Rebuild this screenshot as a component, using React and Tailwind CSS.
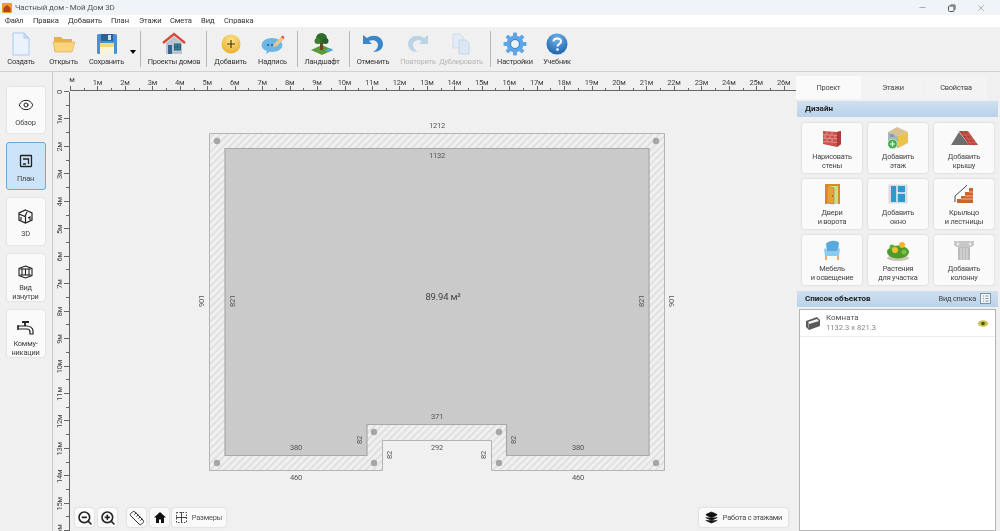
import React from 'react';
import { Eye, Minus, X, Layers, ZoomIn, ZoomOut, Ruler } from 'lucide-react';

const menuItems = [
  { label: 'Файл', width: 'w-[28px]' },
  { label: 'Правка', width: 'w-[35px]' },
  { label: 'Добавить', width: 'w-[43px]' },
  { label: 'План', width: 'w-[28px]' },
  { label: 'Этажи', width: 'w-[31px]' },
  { label: 'Смета', width: 'w-[31px]' },
  { label: 'Вид', width: 'w-[23px]' },
  { label: 'Справка', width: 'w-[40px]' },
];

// --- toolbar icons ---
const NewIcon = () => (
  <svg width="20" height="24" viewBox="0 0 20 24">
    <path d="M2 1h11l5 5v17H2z" fill="#eaf2fd" stroke="#a9c8ef" />
    <path d="M13 1v5h5z" fill="#c9def6" stroke="#a9c8ef" />
  </svg>
);
const OpenIcon = () => (
  <svg width="24" height="20" viewBox="0 0 24 20">
    <path d="M2 3h7l2 2h9v12H2z" fill="#e8b04a" />
    <path d="M1 8h22l-3 10H3z" fill="#fbd47f" stroke="#e3a63e" strokeWidth="0.6" />
  </svg>
);
const SaveIcon = () => (
  <svg width="22" height="22" viewBox="0 0 22 22">
    <rect x="1" y="1" width="20" height="20" rx="1.5" fill="#4a90d9" />
    <rect x="5" y="1" width="12" height="7" fill="#2c5f94" />
    <rect x="12" y="2" width="3" height="5" fill="#cfe2f5" />
    <rect x="4" y="10" width="14" height="11" fill="#f8f4d8" />
    <rect x="4" y="10" width="14" height="4" fill="#f2dc7a" />
  </svg>
);
const ProjectsIcon = () => (
  <svg width="24" height="24" viewBox="0 0 24 24">
    <path d="M1 11L12 2l11 9" fill="none" stroke="#d9483b" strokeWidth="2.4" />
    <path d="M4 11l8-6.5L20 11v11H4z" fill="#b9c4cf" />
    <rect x="6" y="13" width="4" height="9" fill="#33668f" />
    <rect x="12.5" y="12" width="6" height="6" fill="#3a8aa8" stroke="#1f4f66" strokeWidth="0.8" />
    <path d="M15.5 12v6M12.5 15h6" stroke="#1f4f66" strokeWidth="0.7" />
  </svg>
);
const AddIcon = () => (
  <svg width="20" height="20" viewBox="0 0 20 20">
    <defs>
      <radialGradient id="addGrad" cx="50%" cy="30%" r="75%">
        <stop offset="0%" stopColor="#fbe38a" />
        <stop offset="100%" stopColor="#e8ad2a" />
      </radialGradient>
    </defs>
    <circle cx="10" cy="10" r="9.5" fill="url(#addGrad)" />
    <path d="M10 6v8M6 10h8" stroke="#4a3a10" strokeWidth="1.2" />
  </svg>
);
const NoteIcon = () => (
  <svg width="24" height="20" viewBox="0 0 24 20">
    <ellipse cx="11" cy="11" rx="10.5" ry="7" fill="#6cb7e6" />
    <path d="M6 16l-1 4 5-3z" fill="#6cb7e6" />
    <circle cx="7" cy="11" r="0.9" fill="#1e4a6b" />
    <circle cx="11" cy="11" r="0.9" fill="#1e4a6b" />
    <path d="M13 10l7-7 3 2-7 7-4 1z" fill="#f0c68a" />
    <path d="M20 3l1.5-1.5 2 2L22.500 5z" fill="#d9483b" />
  </svg>
);
const LandscapeIcon = () => (
  <svg width="24" height="24" viewBox="0 0 24 24">
    <path d="M1 18l11-5 11 5-11 5z" fill="#5b9a3c" />
    <path d="M15 18l5-2 3 2-5 2z" fill="#57a7d6" />
    <rect x="10" y="11" width="3" height="7" fill="#6b4423" />
    <circle cx="11.500" cy="6.500" r="5.500" fill="#2f6b2a" />
    <circle cx="7.500" cy="9" r="3" fill="#3c7f33" />
    <circle cx="15.500" cy="9" r="3" fill="#28602a" />
  </svg>
);
const UndoIcon = ({ muted }) => (
  <svg width="22" height="20" viewBox="0 0 22 20">
    <path d="M1 1v9h9L7 7c4-2 9 0 9 4 0 3-2 5-5 7 6 0 10-3 10-8C21 3 12-1 5 4z" fill={muted ? '#bcd3e6' : '#3d86c9'} />
  </svg>
);
const DuplicateIcon = () => (
  <svg width="18" height="22" viewBox="0 0 18 22">
    <path d="M1 1h7l3 3v11H1z" fill="#e4edf6" stroke="#cbdcec" />
    <path d="M7 7h7l3 3v11H7z" fill="#dbe7f3" stroke="#c2d6e9" />
  </svg>
);
const GearIcon = () => (
  <svg width="24" height="24" viewBox="0 0 24 24">
    <g fill="#5ea6e6">
      <circle cx="12" cy="12" r="8.500" />
      <rect x="10" y="0.500" width="4" height="23" rx="1" />
      <rect x="10" y="0.500" width="4" height="23" rx="1" transform="rotate(45 12 12)" />
      <rect x="10" y="0.500" width="4" height="23" rx="1" transform="rotate(90 12 12)" />
      <rect x="10" y="0.500" width="4" height="23" rx="1" transform="rotate(135 12 12)" />
    </g>
    <circle cx="12" cy="12" r="4.500" fill="#e8f2fb" stroke="#3a7cbd" />
  </svg>
);
const HelpIcon = () => (
  <svg width="22" height="22" viewBox="0 0 22 22">
    <defs>
      <radialGradient id="helpGrad" cx="50%" cy="25%" r="80%">
        <stop offset="0%" stopColor="#6fb2ec" />
        <stop offset="100%" stopColor="#175fa8" />
      </radialGradient>
    </defs>
    <circle cx="11" cy="11" r="10.500" fill="url(#helpGrad)" />
    <path d="M7.500 8.500C7.500 4.500 15 4.500 15 8.500c0 2.500-3.500 2.500-3.500 5" fill="none" stroke="#fff" strokeWidth="2" />
    <circle cx="11.500" cy="16.500" r="1.300" fill="#fff" />
  </svg>
);

const tools = [
  { label: 'Создать', icon: <NewIcon />, width: 'w-[42px]' },
  { label: 'Открыть', icon: <OpenIcon />, width: 'w-[43px]' },
  { label: 'Сохранить', icon: <SaveIcon />, width: 'w-[43px]' },
  { arrow: true },
  { sep: true, margin: 'ml-[3px] mr-[1px]' },
  { label: 'Проекты домов', icon: <ProjectsIcon />, width: 'w-[64px]' },
  { sep: true, margin: 'mx-0' },
  { label: 'Добавить', icon: <AddIcon />, width: 'w-[47px]' },
  { label: 'Надпись', icon: <NoteIcon />, width: 'w-[37px]' },
  { sep: true, margin: 'ml-[6px] mr-[1px]' },
  { label: 'Ландшафт', icon: <LandscapeIcon />, width: 'w-[46px]' },
  { sep: true, margin: 'ml-[4px] mr-[1px]' },
  { label: 'Отменить', icon: <UndoIcon />, width: 'w-[44px]' },
  { label: 'Повторить', icon: <div className="-scale-x-100"><UndoIcon muted /></div>, width: 'w-[46px]', muted: true },
  { label: 'Дублировать', icon: <DuplicateIcon />, width: 'w-[40px]', muted: true },
  { sep: true, margin: 'ml-[9px] mr-[1px]' },
  { label: 'Настройки', icon: <GearIcon />, width: 'w-[46px]' },
  { label: 'Учебник', icon: <HelpIcon />, width: 'w-[38px]' },
];

// --- sidebar icons ---
const PlanIcon = () => (
  <svg width="14" height="14" viewBox="0 0 14 14" fill="none" stroke="#222" strokeWidth="1.300">
    <rect x="1.500" y="1.500" width="11" height="11" rx="0.500" />
    <path d="M4 5h5.500v5M7 10H4" />
  </svg>
);
const CubeHouseIcon = () => (
  <svg width="15" height="15" viewBox="0 0 15 15" fill="none" stroke="#222" strokeWidth="1.200">
    <path d="M7.500 1L14 4v7l-6.500 3L1 11V4z" />
    <path d="M1 5l6 2.500L9 3M7.500 7.500V14" />
    <path d="M3 8v3M10 9l2-1v3" />
  </svg>
);
const InsideIcon = () => (
  <svg width="15" height="14" viewBox="0 0 15 14" fill="none" stroke="#222" strokeWidth="1.100">
    <path d="M7.500 1l6.500 2.500v7L7.500 13 1 10.500v-7z" />
    <rect x="4" y="4" width="7" height="6" />
    <path d="M2 4h2M11 4h2M2 10h2M11 10h2M7.500 4v6" />
  </svg>
);
const TapIcon = () => (
  <svg width="18" height="16" viewBox="0 0 18 16" fill="none" stroke="#222" strokeWidth="1.200">
    <path d="M1 6h9c3 0 6 2 6 5v3h-3v-2c0-2-1-3-3-3H1z" />
    <path d="M8 6V3M5 2h7" strokeWidth="1.800" />
    <path d="M1 5v5" />
  </svg>
);

const sideButtons = [
  { label: ['Обзор'], icon: <Eye size={16} strokeWidth={1.500} className="text-[#222]" />, size: 'h-[46px] mb-[9px]' },
  { label: ['План'], icon: <PlanIcon />, size: 'h-[48px] mb-[8px]', active: true },
  { label: ['3D'], icon: <CubeHouseIcon />, size: 'h-[47px] mb-[9px]' },
  { label: ['Вид', 'изнутри'], icon: <InsideIcon />, size: 'h-[47px] mb-[9px]' },
  { label: ['Комму-', 'никации'], icon: <TapIcon />, size: 'h-[47px]' },
];

// --- design panel icons ---
const WallIcon = () => (
  <svg width="20" height="18" viewBox="0 0 20 18">
    <path d="M1 2l14 1 4 -1v13l-4 3-14-3z" fill="#c9524c" />
    <path d="M15 3v15l4-3V2z" fill="#a83d3a" />
    <path d="M1 5.500l14 1M1 9l14 1M1 12.500l14 1M5 2.500v3M10 3v3M3 6v3.500M8 6.500v3.500M13 6.500v3.500M5 9.500v3.500M10 10v3.500" stroke="#eaa9a3" strokeWidth="0.700" />
  </svg>
);
const FloorIcon = () => (
  <svg width="22" height="24" viewBox="0 0 22 24">
    <path d="M10 1l11 5-10 4L1 6z" fill="#d9c193" />
    <path d="M1 6l10 4v12L1 17z" fill="#a9b4bd" />
    <path d="M11 10l10-4v11l-10 5z" fill="#ecc24d" />
    <rect x="3" y="8" width="4" height="3" fill="#7f9fb8" />
    <circle cx="5.500" cy="18" r="4.800" fill="#3db249" stroke="#fff" strokeWidth="0.600" />
    <path d="M5.500 15.500v5M3 18h5" stroke="#fff" strokeWidth="1.200" />
  </svg>
);
const RoofIcon = () => (
  <svg width="28" height="16" viewBox="0 0 28 16">
    <path d="M1 15L9 2 19 15z" fill="#6e6e6e" />
    <path d="M9 1h9l10 14H19z" fill="#b5403a" />
    <path d="M11 5h9M14 9h9M17 12.500h9M13 1l9 14M17 1l9 14" stroke="#d9736c" strokeWidth="0.600" />
  </svg>
);
const DoorIcon = () => (
  <svg width="17" height="22" viewBox="0 0 17 22">
    <rect x="1" y="1" width="15" height="20" fill="#d98a2b" />
    <rect x="3" y="3" width="11" height="18" fill="#c7e08a" />
    <path d="M3 3l7 2v16l-7-1z" fill="#e6a03c" stroke="#b8701c" strokeWidth="0.500" />
    <circle cx="8.500" cy="13" r="0.700" fill="#7a4a10" />
  </svg>
);
const WindowIcon = () => (
  <svg width="20" height="20" viewBox="0 0 20 20">
    <rect x="0.500" y="0.500" width="19" height="19" fill="#d7dde2" />
    <rect x="3" y="2" width="14" height="16" fill="#2a9ad0" />
    <path d="M9 2v16M9 9h8" stroke="#eef4f8" strokeWidth="1.500" />
  </svg>
);
const StairsIcon = () => (
  <svg width="20" height="20" viewBox="0 0 20 20">
    <path d="M1 19h18V4h-4v4h-4v4H7v3H3v4z" fill="#c9662f" />
    <path d="M7 15h12M11 12h8M15 8h4" stroke="#f3c9a5" strokeWidth="0.800" />
    <path d="M1 12L10 4l3-3" fill="none" stroke="#333" strokeWidth="0.900" />
    <path d="M1 12v6" stroke="#333" strokeWidth="0.900" />
  </svg>
);
const ChairIcon = () => (
  <svg width="18" height="20" viewBox="0 0 18 20">
    <path d="M3 4C4 1 14-1 16 3l-1 9H4z" fill="#5aa9dc" />
    <path d="M1 9c2-1 3 0 3 2h10c0-2 2-3 3-2l-1 7H2z" fill="#8accef" />
    <path d="M3 16v4M15 16v4" stroke="#d98a2b" strokeWidth="1.300" />
  </svg>
);
const PlantsIcon = () => (
  <svg width="24" height="22" viewBox="0 0 24 22">
    <ellipse cx="12" cy="19" rx="11" ry="3" fill="#c9c5b2" />
    <ellipse cx="12" cy="13" rx="11" ry="6.500" fill="#4f9a2c" />
    <circle cx="6" cy="8" r="2.500" fill="#5fae34" />
    <circle cx="9" cy="11" r="3" fill="#f2c230" />
    <circle cx="16" cy="6" r="3" fill="#f2b530" />
    <circle cx="18" cy="13" r="2.500" fill="#7ac143" />
  </svg>
);
const ColumnIcon = () => (
  <svg width="20" height="20" viewBox="0 0 20 20">
    <path d="M0 1h20v3c0 2-2 3-3 3H3C2 7 0 6 0 4z" fill="#c8c8c8" />
    <rect x="4" y="7" width="12" height="13" fill="#bcbcbc" />
    <path d="M7 8v12M10 8v12M13 8v12" stroke="#e4e4e4" strokeWidth="0.900" />
    <circle cx="4" cy="4" r="1.200" fill="#f0f0f0" />
    <circle cx="16" cy="4" r="1.200" fill="#f0f0f0" />
  </svg>
);

const designItems = [
  { label: ['Нарисовать', 'стены'], icon: <WallIcon /> },
  { label: ['Добавить', 'этаж'], icon: <FloorIcon /> },
  { label: ['Добавить', 'крышу'], icon: <RoofIcon /> },
  { label: ['Двери', 'и ворота'], icon: <DoorIcon /> },
  { label: ['Добавить', 'окно'], icon: <WindowIcon /> },
  { label: ['Крыльцо', 'и лестницы'], icon: <StairsIcon /> },
  { label: ['Мебель', 'и освещение'], icon: <ChairIcon /> },
  { label: ['Растения', 'для участка'], icon: <PlantsIcon /> },
  { label: ['Добавить', 'колонну'], icon: <ColumnIcon /> },
];

const M = 27.45;
const steps = Array.from({ length: 53 }, (_, i) => i);

function TopRuler() {
  return (
    <svg width="743" height="20" className="block" viewBox="53 72 743 20">
      <text x="72" y="82" fontSize="7.500" fill="#444" textAnchor="middle">м</text>
      <line x1="70" y1="90.500" x2="796" y2="90.500" stroke="#666" />
      {steps.map((i) => {
        const x = Math.round(70 + (i * M) / 2) + 0.5;
        const major = i % 2 === 0;
        return <line key={i} x1={x} x2={x} y1={major ? 86 : 88} y2="90" stroke="#666" />;
      })}
      {steps.filter((i) => i % 2 === 0 && i > 0).map((i) => (
        <text key={i} x={70 + (i * M) / 2} y="85" fontSize="7.500" fill="#444" textAnchor="middle">{i / 2}м</text>
      ))}
    </svg>
  );
}

function LeftRuler() {
  const marks = Array.from({ length: 33 }, (_, i) => i);
  return (
    <svg width="17" height="439" className="block shrink-0 overflow-visible" viewBox="53 92 17 439">
      <line x1="69.500" y1="92" x2="69.500" y2="531" stroke="#666" />
      {marks.map((i) => {
        const y = Math.round(92 + (i * M) / 2) - 0.5;
        const major = i % 2 === 0;
        return <line key={i} x1={major ? 64 : 66} x2="69" y1={y} y2={y} stroke="#666" />;
      })}
      {marks.filter((i) => i % 2 === 0).map((i) => {
        const y = 92 + (i * M) / 2;
        return (
          <text key={i} x="62" y={y} fontSize="7.500" fill="#444" textAnchor="middle" transform={`rotate(-90 62 ${y})`}>
            {i === 0 ? '0' : `${i / 2}м`}
          </text>
        );
      })}
    </svg>
  );
}

function Dim({ x, y, v, rotate }) {
  return (
    <text
      x={x}
      y={y + 3}
      fontSize="7.500"
      fill="#555"
      textAnchor="middle"
      transform={rotate ? `rotate(-90 ${x} ${y})` : undefined}
    >
      {v}
    </text>
  );
}

function FloorPlan() {
  const walls = 'M209.500 133.500H664.500V470.500H491.500V440.500H382.500V470.500H209.500Z';
  const room = 'M225 148.500H649V455.500H506.500V424.500H367V455.500H225Z';
  const dots = [[217, 141], [656, 141], [217, 463], [656, 463], [374, 432], [499, 432], [374, 463], [499, 463]];
  return (
    <svg width="725" height="439" className="block" viewBox="70 92 725 439">
      <defs>
        <pattern id="hatch" width="5" height="5" patternUnits="userSpaceOnUse" patternTransform="rotate(45)">
          <rect width="5" height="5" fill="#f0f0f0" />
          <rect width="2" height="5" fill="#e0e0e0" />
        </pattern>
      </defs>
      <path d={walls} fill="url(#hatch)" stroke="#b4b4b4" />
      <path d={room} fill="#cacaca" stroke="#a8a8a8" strokeWidth="1.200" />
      {dots.map(([cx, cy]) => <circle key={`${cx}-${cy}`} cx={cx} cy={cy} r="3.200" fill="#a6a6a6" />)}
      <Dim x={437} y={125} v="1212" />
      <Dim x={437} y={155} v="1132" />
      <Dim x={201} y={301} v="901" rotate />
      <Dim x={232} y={301} v="821" rotate />
      <Dim x={641} y={301} v="821" rotate />
      <Dim x={671} y={301} v="901" rotate />
      <text x="443" y="300" fontSize="9.500" fill="#444" textAnchor="middle">89.94 м²</text>
      <Dim x={437} y={416} v="371" />
      <Dim x={437} y={447} v="292" />
      <Dim x={296} y={447} v="380" />
      <Dim x={578} y={447} v="380" />
      <Dim x={296} y={477} v="460" />
      <Dim x={578} y={477} v="460" />
      <Dim x={359} y={440} v="82" rotate />
      <Dim x={389} y={455} v="82" rotate />
      <Dim x={483} y={455} v="82" rotate />
      <Dim x={513} y={440} v="82" rotate />
    </svg>
  );
}

const floatBtn = 'flex items-center justify-center h-[19px] bg-[#fafafa] rounded-[3px] shadow-[0_0_2px_rgba(0,0,0,0.2)]';
const sectionHead = 'font-bold text-[8px] tracking-normal text-[#222]';

export default function App() {
  return (
    <div className="w-[1000px] h-[531px] overflow-hidden flex flex-col bg-[#f0f0f0] text-[#333] font-['Roboto',sans-serif] text-[7.400px] tracking-[-0.2px] blur-[0.3px]">
      {/* title bar */}
      <div className="h-[15px] shrink-0 flex items-center bg-[#eff4f9] pl-[2px]">
        <svg width="10" height="10" viewBox="0 0 10 10" className="mr-[3px]">
          <rect width="10" height="10" rx="1" fill="#f09a2a" />
          <path d="M1.500 5L5 2l3.500 3v4h-7z" fill="#b8401e" />
        </svg>
        <span className="text-[8px] tracking-[-0.15px] text-[#555]">Частный дом - Мой Дом 3D</span>
        <div className="ml-auto flex items-center text-[#555]">
          <Minus size={9} strokeWidth={1.200} className="mr-[21px]" />
          <svg width="8" height="8" viewBox="0 0 8 8" fill="none" stroke="#555" className="mr-[20px]">
            <rect x="0.500" y="2" width="5.500" height="5.500" rx="1" />
            <path d="M2.500 1h4.500v4.500" />
          </svg>
          <X size={10} strokeWidth={1} className="mr-[14px]" />
        </div>
      </div>
      {/* menu */}
      <div className="h-[12px] shrink-0 flex items-center bg-white pl-[5px] text-[7.600px] tracking-[-0.1px] text-[#333]">
        {menuItems.map((m) => <span key={m.label} className={m.width}>{m.label}</span>)}
      </div>
      {/* toolbar */}
      <div className="h-[45px] shrink-0 flex items-center border-b border-[#d0d0d0] bg-[#f0f0f0]">
        {tools.map((t, i) => {
          if (t.sep) return <div key={i} className={`w-px h-[36px] bg-[#b8b8b8] ${t.margin}`} />;
          if (t.arrow) {
            return (
              <div key={i} className="w-[9px] h-full flex items-center justify-center">
                <div className="w-0 h-0 border-x-[3px] border-x-transparent border-t-[4px] border-t-black mt-[5px]" />
              </div>
            );
          }
          return (
            <div key={i} className={`${t.width} shrink-0 flex flex-col items-center`}>
              <div className="h-[26px] flex items-center justify-center">{t.icon}</div>
              <span className={`whitespace-nowrap leading-[10px] ${t.muted ? 'text-[#b5b5b5]' : 'text-[#333]'}`}>{t.label}</span>
            </div>
          );
        })}
      </div>
      {/* main */}
      <div className="flex-1 min-h-0 flex">
        <aside className="w-[53px] shrink-0 border-r border-[#c8c8c8] flex flex-col items-center pt-[15px] pr-[1px]">
          {sideButtons.map((b, i) => (
            <div
              key={i}
              className={`${b.size} flex flex-col items-center rounded-[3px] ${
                b.active
                  ? 'w-[40px] bg-[#cde4f8] border border-[#6fa8d8] pt-[8px]'
                  : 'w-[38px] bg-[#fafafa] shadow-[0_0_2px_rgba(0,0,0,0.15)] pt-[8px]'
              }`}
            >
              <div className="h-[20px] flex items-center justify-center">{b.icon}</div>
              <div className={`${b.label.length > 1 ? 'mt-[1px]' : 'mt-[3px]'} text-center leading-[9px] text-[#444]`}>
                {b.label.map((l) => <div key={l}>{l}</div>)}
              </div>
            </div>
          ))}
        </aside>

        <main className="w-[743px] shrink-0 flex flex-col">
          <TopRuler />
          <div className="flex-1 min-h-0 flex">
            <LeftRuler />
            <div className="relative flex-1">
              <FloorPlan />
              <div className="absolute left-[5px] bottom-[4px] flex">
                <div className={`${floatBtn} w-[19px]`}><ZoomOut size={16} strokeWidth={2.400} className="text-[#222]" /></div>
                <div className={`${floatBtn} w-[19px] ml-[4px]`}><ZoomIn size={16} strokeWidth={2.400} className="text-[#222]" /></div>
                <div className={`${floatBtn} w-[19px] ml-[10px]`}><Ruler size={16} strokeWidth={1.400} className="text-[#222]" /></div>
                <div className={`${floatBtn} w-[19px] ml-[4px]`}>
                  <svg width="12" height="11" viewBox="0 0 12 11" fill="#111">
                    <path d="M6 0L0 5.500h2V11h3V7.500h2V11h3V5.500h2z" />
                  </svg>
                </div>
                <div className={`${floatBtn} w-[54px] ml-[3px] gap-[5px] text-[#555]`}>
                  <svg width="11" height="11" viewBox="0 0 11 11" fill="none" stroke="#444">
                    <path d="M5.500 0v11M0 5.500h11" />
                    <rect x="0.500" y="0.500" width="10" height="10" strokeDasharray="1.500 1.500" />
                  </svg>
                  Размеры
                </div>
              </div>
              <div className={`${floatBtn} absolute right-[8px] bottom-[4px] w-[89px] gap-[5px] text-[#444]`}>
                <Layers size={13} fill="#111" strokeWidth={1.500} className="text-[#111]" />
                Работа с этажами
              </div>
            </div>
          </div>
        </main>

        <aside className="flex-1 min-w-0 flex flex-col pt-[4px]">
          <div className="h-[23px] shrink-0 flex text-[#444]">
            <div className="w-[65px] flex items-center justify-center bg-[#fafafa]">Проект</div>
            <div className="w-[62px] flex items-center justify-center bg-[#f3f3f3] ml-[1px]">Этажи</div>
            <div className="w-[62px] flex items-center justify-center bg-[#f3f3f3] ml-[1px]">Свойства</div>
          </div>
          <div className={`mt-[2px] ml-[1px] mr-[2px] h-[16px] flex items-center px-[8px] bg-gradient-to-b from-[#cfe0f0] to-[#b9d2ea] ${sectionHead}`}>
            Дизайн
          </div>
          <div className="mt-[6px] ml-[6px] grid grid-cols-[60px_60px_60px] grid-rows-[50px_50px_50px] gap-[6px]">
            {designItems.map((d, i) => (
              <div key={i} className="bg-[#fafafa] rounded-[3px] shadow-[0_0_2px_rgba(0,0,0,0.2)] flex flex-col items-center">
                <div className="h-[26px] mt-[2px] flex items-center justify-center">{d.icon}</div>
                <div className="mt-[1px] text-center leading-[9px] text-[#444]">
                  {d.label.map((l) => <div key={l}>{l}</div>)}
                </div>
              </div>
            ))}
          </div>
          <div className="mt-[6px] ml-[1px] mr-[2px] h-[16px] shrink-0 flex items-center justify-between pl-[8px] pr-[7px] bg-gradient-to-b from-[#cfe0f0] to-[#b9d2ea]">
            <span className={sectionHead}>Список объектов</span>
            <span className="flex items-center gap-[4px] text-[#444]">
              Вид списка
              <svg width="11" height="11" viewBox="0 0 11 11" fill="none" stroke="#6a7f90" strokeWidth="0.800">
                <rect x="0.500" y="0.500" width="10" height="10" fill="#eef3f7" />
                <path d="M3 3h1M5.500 3h3M3 5.500h1M5.500 5.500h3M3 8h1M5.500 8h3" />
              </svg>
            </span>
          </div>
          <div className="mt-[2px] ml-[3px] mr-[4px] flex-1 border border-[#b5b5b5] bg-white">
            <div className="h-[27px] flex items-center border-b border-[#eeeeee] pl-[5px] pr-[7px]">
              <svg width="16" height="15" viewBox="0 0 16 15">
                <path d="M1 5l11-4 3 3v6L4 14 1 11z" fill="#5a5a5a" />
                <path d="M3 6l9-3 2 2-10 3z" fill="#f4f4f4" />
                <path d="M3 6l1 2v5l-1-2z" fill="#999" />
              </svg>
              <div className="ml-[5px] flex flex-col">
                <span className="text-[8px] tracking-normal leading-[10px] text-[#555]">Комната</span>
                <span className="text-[7.600px] tracking-normal leading-[10px] text-[#888]">1132.3 x 821.3</span>
              </div>
              <svg width="10" height="7" viewBox="0 0 10 7" className="ml-auto">
                <ellipse cx="5" cy="3.500" rx="5" ry="3.200" fill="#c8c34a" />
                <circle cx="5" cy="3.500" r="1.800" fill="#3f5a1e" />
              </svg>
            </div>
          </div>
        </aside>
      </div>
    </div>
  );
}
